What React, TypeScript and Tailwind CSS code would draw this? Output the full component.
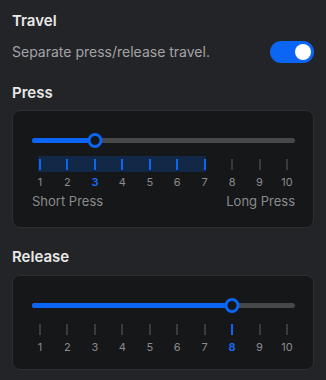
import React from 'react';

const TICKS = [1, 2, 3, 4, 5, 6, 7, 8, 9, 10];

type SliderProps = {
  value: number;
  rangeEnd?: number;
  labels?: boolean;
};

const TravelSlider: React.FC<SliderProps> = ({ value, rangeEnd, labels }) => {
  const pct = ((value - 1) / 9) * 100;
  const rangePct = rangeEnd ? ((rangeEnd - 1) / 9) * 100 : 0;
  return (
    <div className={`rounded-lg border border-[#2d2e31] bg-[#161719] pl-[19px] pr-[18px] pt-[23px] ${labels ? 'pb-[18px]' : 'pb-[15px]'}`}>
      {/* track */}
      <div className="relative flex h-[13px] items-center">
        <div className="h-[5px] w-full rounded-full bg-[#474849]" />
        <div className="absolute inset-y-0 left-[8px] right-[8px]">
          <div className="absolute left-[-8px] top-[4px] h-[5px] rounded-full bg-[#0b66f5]" style={{ width: `calc(${pct}% + 8px)` }} />
          <div
            className="absolute top-[-1px] h-[15px] w-[15px] -translate-x-1/2 rounded-full border-[3px] border-[#0b66f5] bg-[#161719]"
            style={{ left: `${pct}%` }}
          />
        </div>
      </div>

      {/* ticks */}
      <div className="relative mx-[8px] mt-[12px]">
        {rangeEnd && (
          <div className="absolute left-[-2px] top-[-3px] h-[16px] bg-[#122847]" style={{ width: `calc(${rangePct}% + 3px)` }} />
        )}
        <div className="relative flex justify-between">
          {TICKS.map((n) => {
            const on = rangeEnd ? n <= rangeEnd : n === value;
            const active = n === value;
            return (
              <div key={n} className="flex w-0 flex-col items-center">
                <div className={`h-[11px] w-[2px] ${on ? 'bg-[#0b66f5]' : 'bg-[#3a3b3d]'}`} />
                <span className={`mt-[5px] text-[11px] leading-[14px] ${active ? 'font-semibold text-[#1a6dff]' : 'text-[#8a8b8d]'}`}>{n}</span>
              </div>
            );
          })}
        </div>
      </div>

      {labels && (
        <div className="mt-[4px] flex justify-between text-[13px] leading-[16px] text-[#8a8b8d]">
          <span>Short Press</span>
          <span>Long Press</span>
        </div>
      )}
    </div>
  );
};

const App: React.FC = () => {
  return (
    <div className="h-[380px] w-[326px] bg-[#232427] px-3 pt-[11px] font-['Inter',sans-serif] text-[#e8e8e8]">
      <h3 className="text-[15px] font-semibold leading-[20px]">Travel</h3>

      <div className="mt-[10px] flex items-center justify-between">
        <p className="text-[14px] leading-[20px] text-[#a2a3a5]">Separate press/release travel.</p>
        <div className="flex h-[22px] w-[44px] items-center justify-end rounded-full bg-[#0b66f5] pr-[3px]">
          <div className="h-[16px] w-[16px] rounded-full bg-white" />
        </div>
      </div>

      <h3 className="mt-[20px] text-[15px] font-semibold leading-[20px]">Press</h3>
      <div className="mt-[7px]">
        <TravelSlider value={3} rangeEnd={7} labels />
      </div>

      <h3 className="mt-[19px] text-[15px] font-semibold leading-[20px]">Release</h3>
      <div className="mt-[8px]">
        <TravelSlider value={8} />
      </div>
    </div>
  );
};

export default App;
